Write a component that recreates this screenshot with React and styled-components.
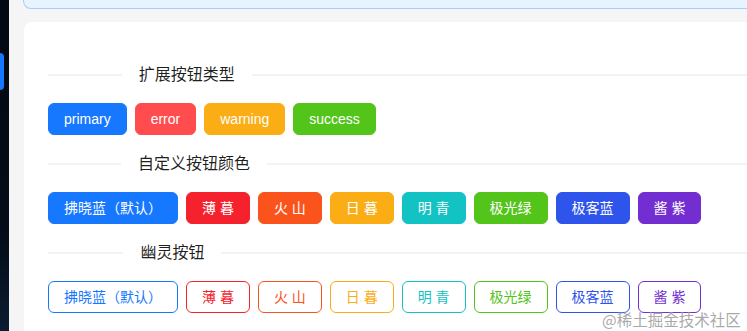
import React from 'react';
import styled, { createGlobalStyle } from 'styled-components';

const GlobalStyle = createGlobalStyle`
  html, body {
    margin: 0;
    padding: 0;
    background: #f5f5f5;
  }
  body {
    font-family: "Liberation Sans", "Noto Sans CJK SC", sans-serif;
  }
`;

const Page = styled.div`
  position: relative;
  display: flex;
  width: 747px;
  height: 331px;
  overflow: hidden;
  background: #f5f5f5;
`;

const Sidebar = styled.div`
  flex: 0 0 9px;
  padding-top: 53px;
  box-sizing: border-box;
  background: linear-gradient(180deg, #020912 0%, #030c18 70%, #0b1c31 100%);
`;

const MenuItem = styled.div`
  width: 4px;
  height: 37px;
  background: #1677ff;
  border-radius: 0 5px 5px 0;
`;

const Main = styled.div`
  flex: 1;
  min-width: 0;
  padding-left: 14px;
  display: flex;
  flex-direction: column;
`;

const Alert = styled.div`
  flex: 0 0 auto;
  height: 8px;
  margin-right: -20px;
  background: #e6f4ff;
  border: 1px solid #a5cdf5;
  border-top: none;
  border-radius: 0 0 8px 8px;
`;

const Card = styled.div`
  flex: 1 0 auto;
  margin-top: 13px;
  margin-left: 1px;
  width: 1655px;
  box-sizing: border-box;
  padding: 24px;
  background: #fff;
  border-radius: 8px 0 0 0;
`;

const Divider = styled.div`
  display: flex;
  align-items: center;
  height: 24px;
  margin: 17px 0 16px;

  &::before,
  &::after {
    content: '';
    border-top: 2px solid #f3f3f4;
  }
  &::before {
    width: 5%;
  }
  &::after {
    width: 95%;
  }
`;

const DividerText = styled.span`
  padding: 0 17px;
  white-space: nowrap;
  font-family: "Liberation Sans", "Noto Sans CJK SC", sans-serif;
  font-size: 16px;
  font-weight: 400;
  line-height: 24px;
  color: rgba(0, 0, 0, 0.88);
`;

const ButtonRow = styled.div`
  display: flex;
  gap: 8px;
`;

const Button = styled.button`
  height: 32px;
  padding: 0 15px;
  border-radius: 6px;
  border: 1px solid ${(p) => p.$color};
  background: ${(p) => (p.$ghost ? '#fff' : p.$color)};
  color: ${(p) => (p.$ghost ? p.$color : '#fff')};
  font-family: "Liberation Sans", "Noto Sans CJK SC", sans-serif;
  font-size: 14px;
  line-height: 30px;
  white-space: pre;
  cursor: pointer;
`;

const Watermark = styled.div`
  position: absolute;
  left: 602px;
  top: 309px;
  font-family: "Noto Sans CJK SC", sans-serif;
  font-size: 15.5px;
  line-height: 20px;
  color: rgba(140, 140, 140, 0.75);
  text-shadow: 0 0 2px #fff;
  white-space: nowrap;
`;

const types = [
  { label: 'primary', color: '#1677ff' },
  { label: 'error', color: '#ff4d4f' },
  { label: 'warning', color: '#faad14' },
  { label: 'success', color: '#52c41a' },
];

const palette = [
  { label: '拂晓蓝（默认）', color: '#1677ff' },
  { label: '薄 暮', color: '#f5222d' },
  { label: '火 山', color: '#fa541c' },
  { label: '日 暮', color: '#faad14' },
  { label: '明 青', color: '#13c2c2' },
  { label: '极光绿', color: '#52c41a' },
  { label: '极客蓝', color: '#2f54eb' },
  { label: '酱 紫', color: '#722ed1' },
];

const App = () => (
  <>
    <GlobalStyle />
    <Page>
      <Sidebar>
        <MenuItem />
      </Sidebar>
      <Main>
        <Alert />
        <Card>
          <Divider>
            <DividerText>扩展按钮类型</DividerText>
          </Divider>
          <ButtonRow>
            {types.map((t) => (
              <Button key={t.label} $color={t.color}>{t.label}</Button>
            ))}
          </ButtonRow>

          <Divider>
            <DividerText>自定义按钮颜色</DividerText>
          </Divider>
          <ButtonRow>
            {palette.map((t) => (
              <Button key={t.label} $color={t.color}>{t.label}</Button>
            ))}
          </ButtonRow>

          <Divider>
            <DividerText>幽灵按钮</DividerText>
          </Divider>
          <ButtonRow>
            {palette.map((t) => (
              <Button key={t.label} $color={t.color} $ghost>{t.label}</Button>
            ))}
          </ButtonRow>
        </Card>
      </Main>
      <Watermark>@稀土掘金技术社区</Watermark>
    </Page>
  </>
);

export default App;
